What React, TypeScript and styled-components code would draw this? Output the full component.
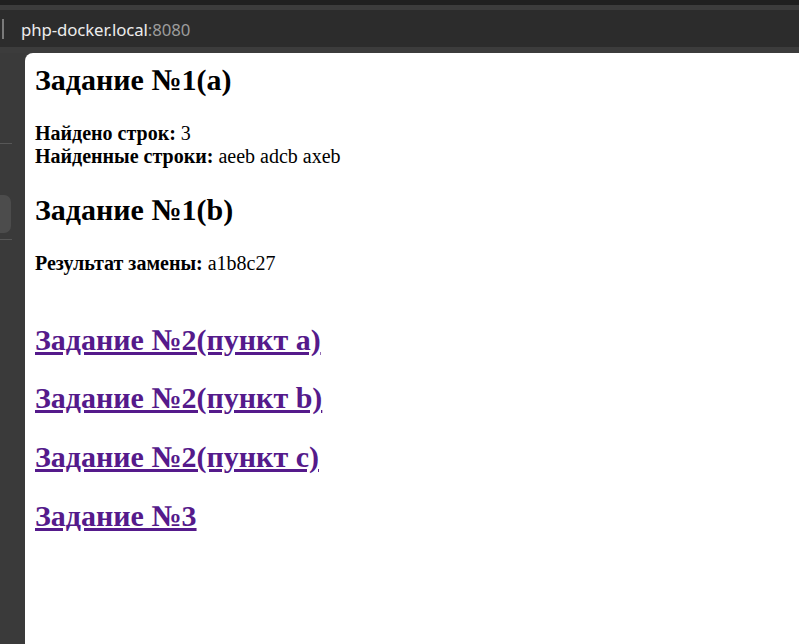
import React from "react";
import styled, { createGlobalStyle } from "styled-components";

const Global = createGlobalStyle`
  html, body { margin: 0; padding: 0; height: 100%; background: #3b3b3b; }
  #root { height: 100%; }
`;

const Frame = styled.div`
  display: flex;
  flex-direction: column;
  height: 644px;
  width: 799px;
  background: #3b3b3b;
  overflow: hidden;
`;

const TopStrip = styled.div`
  height: 5px;
  background: #202020;
  flex: none;
`;

const TabGap = styled.div`
  height: 5px;
  background: #3c3c3c;
  flex: none;
`;

const AddressBar = styled.div`
  height: 37px;
  background: #2c2c2c;
  flex: none;
  display: flex;
  align-items: center;
  gap: 17px;
  padding-left: 2px;
`;

const Divider = styled.div`
  width: 2px;
  height: 20px;
  background: #7a7a7a;
`;

const Url = styled.div`
  font-family: "Noto Sans", "Open Sans", sans-serif;
  font-size: 16.8px;
  color: #ececec;
  letter-spacing: -0.1px;
  padding-top: 1px;
`;

const Port = styled.span`
  color: #9c9c9c;
`;

const LowerBand = styled.div`
  height: 6px;
  background: #3c3c3c;
  flex: none;
`;

const Body = styled.div`
  flex: 1;
  display: flex;
  min-height: 0;
`;

const Sidebar = styled.div`
  width: 25px;
  flex: none;
  background: #3a3a3a;
  display: flex;
  flex-direction: column;
  padding-top: 90px;
`;

const SideLine = styled.div<{ $gap: number }>`
  width: 12px;
  height: 1px;
  background: #575757;
  margin-bottom: ${(p) => p.$gap}px;
`;

const SideButton = styled.div`
  width: 11px;
  height: 38px;
  background: #4c4c4c;
  border-radius: 0 7px 7px 0;
  margin-bottom: 6px;
`;

const Page = styled.div`
  flex: 1;
  background: #ffffff;
  border-top-left-radius: 8px;
  padding: 10px;
  font-family: "Liberation Serif", "Times New Roman", serif;
  font-size: 20px;
  color: #000;
  overflow: hidden;
`;

const Heading = styled.h2<{ $first?: boolean }>`
  font-size: 30px;
  font-weight: bold;
  margin: ${(p) => (p.$first ? "0" : "24.9px")} 0 24.9px;
  line-height: normal;
`;

const Para = styled.p`
  margin: 20px 0;
`;

const Link = styled.a`
  color: #551a8b;
  text-decoration: underline;
`;

export default function App() {
  return (
    <>
      <Global />
      <Frame>
        <TopStrip />
        <TabGap />
        <AddressBar>
          <Divider />
          <Url>
            php-docker.local<Port>:8080</Port>
          </Url>
        </AddressBar>
        <LowerBand />
        <Body>
          <Sidebar>
            <SideLine $gap={51} />
            <SideButton />
            <SideLine $gap={0} />
          </Sidebar>
          <Page>
            <Heading $first>Задание №1(a)</Heading>
            <Para>
              <b>Найдено строк:</b> 3<br />
              <b>Найденные строки:</b> aeeb adcb axeb
            </Para>
            <Heading>Задание №1(b)</Heading>
            <Para>
              <b>Результат замены:</b> a1b8c27
              <br />
              <br />
            </Para>
            <Heading>
              <Link href="#">Задание №2(пункт a)</Link>
            </Heading>
            <Heading>
              <Link href="#">Задание №2(пункт b)</Link>
            </Heading>
            <Heading>
              <Link href="#">Задание №2(пункт c)</Link>
            </Heading>
            <Heading>
              <Link href="#">Задание №3</Link>
            </Heading>
          </Page>
        </Body>
      </Frame>
    </>
  );
}
